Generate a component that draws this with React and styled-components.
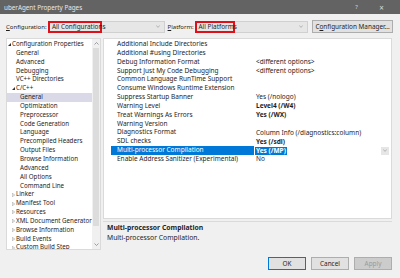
import React from 'react';
import styled, { createGlobalStyle } from 'styled-components';

const GlobalStyle = createGlobalStyle`
  html, body { margin: 0; padding: 0; background: #f0f0f0; }
  body { font-family: "Noto Sans", "Open Sans", sans-serif; color: #1e1e1e; }
`;

const tree = [
  { label: 'Configuration Properties', level: 0, toggle: 'open' },
  { label: 'General', level: 1 },
  { label: 'Advanced', level: 1 },
  { label: 'Debugging', level: 1 },
  { label: 'VC++ Directories', level: 1 },
  { label: 'C/C++', level: 1, toggle: 'open' },
  { label: 'General', level: 2, selected: true },
  { label: 'Optimization', level: 2 },
  { label: 'Preprocessor', level: 2 },
  { label: 'Code Generation', level: 2 },
  { label: 'Language', level: 2 },
  { label: 'Precompiled Headers', level: 2 },
  { label: 'Output Files', level: 2 },
  { label: 'Browse Information', level: 2 },
  { label: 'Advanced', level: 2 },
  { label: 'All Options', level: 2 },
  { label: 'Command Line', level: 2 },
  { label: 'Linker', level: 1, toggle: 'closed' },
  { label: 'Manifest Tool', level: 1, toggle: 'closed' },
  { label: 'Resources', level: 1, toggle: 'closed' },
  { label: 'XML Document Generator', level: 1, toggle: 'closed' },
  { label: 'Browse Information', level: 1, toggle: 'closed' },
  { label: 'Build Events', level: 1, toggle: 'closed' },
  { label: 'Custom Build Step', level: 1, toggle: 'closed' },
];

const props = [
  ['Additional Include Directories', ''],
  ['Additional #using Directories', ''],
  ['Debug Information Format', '<different options>'],
  ['Support Just My Code Debugging', '<different options>'],
  ['Common Language RunTime Support', ''],
  ['Consume Windows Runtime Extension', ''],
  ['Suppress Startup Banner', 'Yes (/nologo)'],
  ['Warning Level', 'Level4 (/W4)', true],
  ['Treat Warnings As Errors', 'Yes (/WX)', true],
  ['Warning Version', ''],
  ['Diagnostics Format', 'Column Info (/diagnostics:column)'],
  ['SDL checks', 'Yes (/sdl)', true],
  ['Multi-processor Compilation', 'Yes (/MP)', true, true],
  ['Enable Address Sanitizer (Experimental)', 'No'],
];

const Dialog = styled.div`
  width: 400px;
  height: 278px;
  display: flex;
  flex-direction: column;
  overflow: hidden;
  background: #f0f0f0;
`;

const TitleBar = styled.div`
  height: 14px;
  background: #636363;
  color: #e8e8e8;
  display: flex;
  align-items: center;
  padding: 0 6px 0 4px;
  font-size: 6.3px;
`;

const Title = styled.span`
  flex: 1;
`;

const TitleButton = styled.span`
  width: 25px;
  text-align: center;
  font-size: ${p => p.$big ? '8px' : '6px'};
  color: #d8d8d8;
`;

const ConfigRow = styled.div`
  display: flex;
  align-items: center;
  height: 13px;
  margin: 6px 7px 5px 6px;
  font-size: 6.4px;
`;

const Label = styled.span`
  width: ${p => p.$w}px;
  font-size: 6px;
  white-space: nowrap;
`;

const Select = styled.div`
  width: ${p => p.$w}px;
  height: 12px;
  box-sizing: border-box;
  background: #e6e6e6;
  border: 1px solid #d0d0d0;
  display: flex;
  align-items: center;
  margin-right: ${p => p.$gap}px;
`;

const SelectValue = styled.span`
  width: ${p => p.$w}px;
  height: 12px;
  box-sizing: border-box;
  border: 2px solid #e0101a;
  display: flex;
  align-items: center;
  padding-left: 2px;
  white-space: nowrap;
  margin: -1px 0 -1px -1px;
`;

const SelectArrow = styled.span`
  margin-left: auto;
  margin-right: 4px;
  display: flex;
`;

const Button = styled.div`
  width: ${p => p.$w}px;
  height: 13px;
  box-sizing: border-box;
  border: 1px solid ${p => p.$primary ? '#0078d7' : '#adadad'};
  background: ${p => p.$disabled ? '#cccccc' : '#e1e1e1'};
  color: ${p => p.$disabled ? '#9a9a9a' : '#1e1e1e'};
  display: flex;
  align-items: center;
  justify-content: center;
  font-size: 6.4px;
  white-space: nowrap;
`;

const Main = styled.div`
  display: flex;
  gap: 2px;
  margin: 0 8px 0 6px;
  height: 212px;
`;

const TreePanel = styled.div`
  width: 95px;
  box-sizing: border-box;
  background: #fff;
  border: 1px solid #dadada;
  display: flex;
  overflow: hidden;
`;

const TreeList = styled.div`
  flex: 1;
  padding-top: 1px;
  overflow: hidden;
`;

const TreeItem = styled.div`
  flex-shrink: 0;
  height: 8.85px;
  line-height: 8.85px;
  font-size: 6.2px;
  white-space: nowrap;
  display: flex;
  align-items: center;
  padding-left: ${p => 1 + p.$level * 4}px;
  background: ${p => p.$selected ? '#d9d9e8' : 'transparent'};
`;

const Toggle = styled.span`
  width: 4px;
  display: inline-flex;
  align-items: center;
  justify-content: flex-start;
`;

const ScrollBar = styled.div`
  width: 8px;
  background: #f0f0f0;
  display: flex;
  flex-direction: column;
  align-items: center;
`;

const ScrollArrow = styled.div`
  height: 9px;
  display: flex;
  align-items: center;
  justify-content: center;
`;

const Thumb = styled.div`
  width: 6px;
  height: 178px;
  background: #dcdcdc;
`;

const ScrollGap = styled.div`
  flex: 1;
`;

const RightSide = styled.div`
  flex: 1;
  display: flex;
  flex-direction: column;
  gap: 2px;
`;

const Grid = styled.div`
  height: 181px;
  box-sizing: border-box;
  background: #fff;
  border: 1px solid #dadada;
  padding: 1px 0 0 0;
`;

const PropRow = styled.div`
  display: grid;
  grid-template-columns: 7px 143px 1fr;
  height: 8.85px;
  line-height: 8.85px;
  font-size: 6.5px;
  white-space: nowrap;
`;

const PropName = styled.div`
  padding-left: 6px;
  background: ${p => p.$active ? '#0078d7' : 'transparent'};
  color: ${p => p.$active ? '#fff' : '#1e1e1e'};
  overflow: hidden;
`;

const PropValue = styled.div`
  padding-left: 2px;
  display: flex;
  align-items: center;
  padding-right: 2px;
`;

const ValueText = styled.span`
  font-weight: ${p => p.$bold ? 700 : 400};
  background: ${p => p.$active ? '#0078d7' : 'transparent'};
  color: ${p => p.$active ? '#fff' : '#1e1e1e'};
  padding: 0 1px;
  margin-left: -1px;
  line-height: 8px;
`;

const DropButton = styled.div`
  margin-left: auto;
  width: 8px;
  height: 8px;
  background: #e6e6e6;
  display: flex;
  align-items: center;
  justify-content: center;
`;

const Description = styled.div`
  flex: 1;
  box-sizing: border-box;
  border-top: 1px solid #dadada;
  padding: 1px 4px;
  font-size: 6.8px;
  line-height: 9.5px;
`;

const DescTitle = styled.div`
  font-weight: 700;
`;

const Footer = styled.div`
  display: flex;
  justify-content: flex-end;
  gap: 5px;
  margin: 7px 8px 0 0;
`;

const Chevron = ({ up }) => (
  <svg width="5" height="3" viewBox="0 0 5 3">
    <path d={up ? 'M0.5 2.5 L2.5 0.5 L4.5 2.5' : 'M0.5 0.5 L2.5 2.5 L4.5 0.5'} fill="none" stroke="#7a7a7a" strokeWidth="0.7" />
  </svg>
);

const DownArrow = () => (
  <svg width="4" height="3" viewBox="0 0 4 3">
    <path d="M0.3 0.7 L2 2.3 L3.7 0.7" fill="none" stroke="#8a8a8a" strokeWidth="0.6" />
  </svg>
);

const ToggleIcon = ({ type }) => {
  if (type === 'open') {
    return (
      <svg width="3" height="3" viewBox="0 0 3 3">
        <path d="M3 0 L3 3 L0 3 Z" fill="#333" />
      </svg>
    );
  }
  return (
    <svg width="3" height="4" viewBox="0 0 3 4">
      <path d="M0.3 0.3 L2.7 2 L0.3 3.7 Z" fill="none" stroke="#8a8a8a" strokeWidth="0.5" />
    </svg>
  );
};

export default function App() {
  return (
    <Dialog>
      <GlobalStyle />
      <TitleBar>
        <Title>uberAgent Property Pages</Title>
        <TitleButton>?</TitleButton>
        <TitleButton $big>×</TitleButton>
      </TitleBar>

      <ConfigRow>
        <Label $w={42}><u>C</u>onfiguration:</Label>
        <Select $w={117} $gap={3}>
          <SelectValue $w={54}>All Configurations</SelectValue>
          <SelectArrow><DownArrow /></SelectArrow>
        </Select>
        <Label $w={27}><u>P</u>latform:</Label>
        <Select $w={114} $gap={4}>
          <SelectValue $w={40}>All Platforms</SelectValue>
          <SelectArrow><DownArrow /></SelectArrow>
        </Select>
        <Button $w={81}>C<u>o</u>nfiguration Manager...</Button>
      </ConfigRow>

      <Main>
        <TreePanel>
          <TreeList>
            {tree.map((t, i) => (
              <TreeItem key={i} $level={t.level} $selected={t.selected}>
                <Toggle>{t.toggle && <ToggleIcon type={t.toggle} />}</Toggle>
                {t.label}
              </TreeItem>
            ))}
          </TreeList>
          <ScrollBar>
            <ScrollArrow><Chevron up /></ScrollArrow>
            <Thumb />
            <ScrollGap />
            <ScrollArrow><Chevron /></ScrollArrow>
          </ScrollBar>
        </TreePanel>

        <RightSide>
          <Grid>
            {props.map(([name, value, bold, active], i) => (
              <PropRow key={i}>
                <div />
                <PropName $active={active}>{name}</PropName>
                <PropValue>
                  <ValueText $bold={bold} $active={active}>{value}</ValueText>
                  {active && (
                    <DropButton><DownArrow /></DropButton>
                  )}
                </PropValue>
              </PropRow>
            ))}
          </Grid>
          <Description>
            <DescTitle>Multi-processor Compilation</DescTitle>
            <div>Multi-processor Compilation.</div>
          </Description>
        </RightSide>
      </Main>

      <Footer>
        <Button $w={38} $primary>OK</Button>
        <Button $w={38}>Cancel</Button>
        <Button $w={38} $disabled>Apply</Button>
      </Footer>
    </Dialog>
  );
}
